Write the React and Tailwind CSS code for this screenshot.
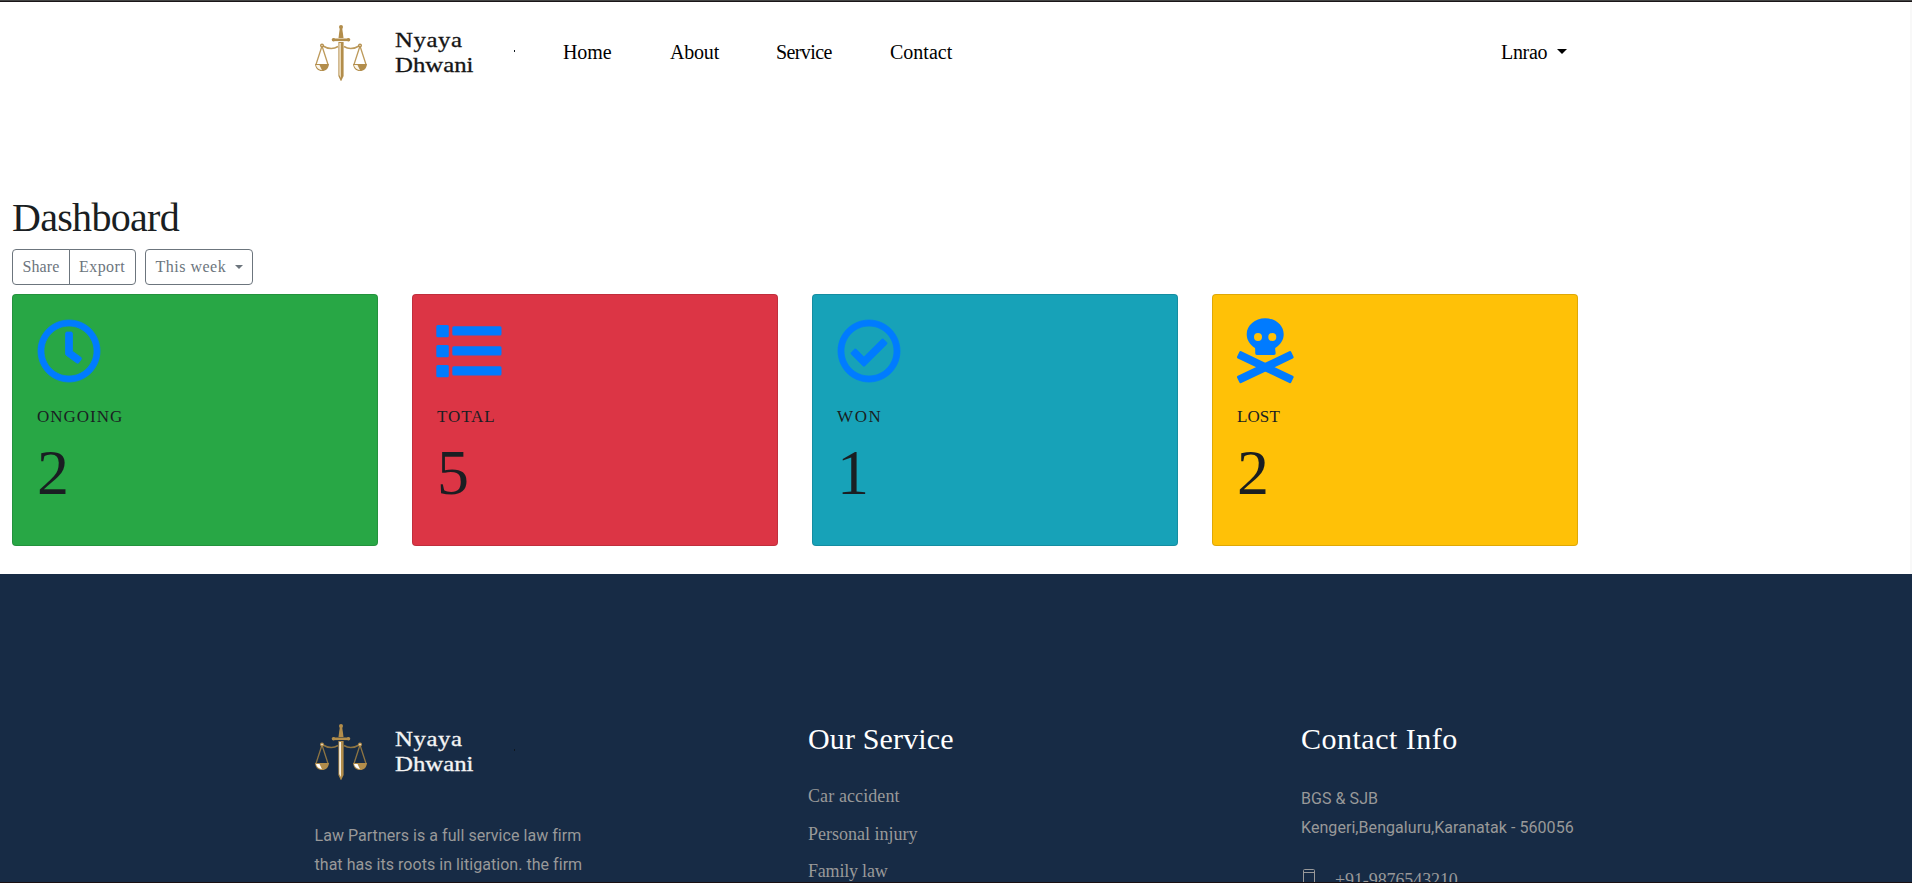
import { FaRegClock, FaRegCheckCircle } from "react-icons/fa";

function Scales({ dark }) {
  const shine = dark ? "#f6efe2" : "#ead9b8";
  const line = dark ? "#8d7442" : "#bd9a5b";
  return (
    <svg width="52" height="56" viewBox="0 0 52 56" fill="none" className="shrink-0">
      <path d="M7 20.5Q16 26 23 21.5M45 20.5Q36 26 29 21.5" stroke={line} strokeWidth="1.5" />
      <path d="M7 21L1 39.5M7 21L13 39.5M45 21L39 39.5M45 21L51 39.5" stroke={line} strokeWidth="1.3" />
      <path d="M0 39H14C13.5 43.5 11 46 7 46S.5 43.5 0 39Z" fill="#b28d4b" />
      <path d="M38 39H52C51.5 43.5 49 46 45 46S38.500 43.5 38 39Z" fill="#b28d4b" />
      <path d="M1 40H4.500L7 45.200Q2 44.500 1 40ZM39 40H42.500L45 45.200Q40 44.500 39 40Z" fill={dark ? "#fff" : "#fbf6ec"} />
      <circle cx="7" cy="20.500" r="2" fill="#b28d4b" />
      <circle cx="45" cy="20.500" r="2" fill="#b28d4b" />
      <circle cx="7" cy="20.500" r=".8" fill={shine} />
      <circle cx="45" cy="20.500" r=".8" fill={shine} />
      <circle cx="26" cy="2" r="2" fill="#b28d4b" />
      <path d="M24.800 3H27.200L28.500 13H23.500Z" fill="#b28d4b" />
      <rect x="18" y="13.500" width="16" height="2.600" fill="#b28d4b" />
      <circle cx="18.500" cy="14.800" r="1.800" fill="#b28d4b" />
      <circle cx="33.500" cy="14.800" r="1.800" fill="#b28d4b" />
      <path d="M23.400 17H28.600V51L26 56.500L23.400 51Z" fill="#b28d4b" />
      <path d="M24.200 18H26V53L24.200 50Z" fill={shine} />
    </svg>
  );
}

function Logo({ dark }) {
  return (
    <div className="flex h-14 w-[200px] items-center">
      <Scales dark={dark} />
      <div
        className={`ml-7 w-[82px] origin-left scale-x-[1.18] text-[21px] leading-[25px] [-webkit-text-stroke:0.3px] ${dark ? "text-[#f4f4f4]" : "text-[#151515]"}`}
      >
        <div className="tracking-[0.5px]">Nyaya</div>
        <div>Dhwani</div>
      </div>
      <span className="mb-[4px] ml-[37px] h-[2px] w-px bg-[#101820]" />
    </div>
  );
}

function ListIcon() {
  return (
    <svg width="66" height="64" viewBox="0 0 66 64" fill="currentColor" className="-ml-px">
      {[6, 26, 46].map((y) => (
        <g key={y}>
          <rect x="0.300" y={y} width="12.500" height="12.200" rx="1.500" />
          <rect x="16.300" y={y + 1.2} width="49.200" height="9.400" rx="1.500" />
        </g>
      ))}
    </svg>
  );
}

function SkullIcon() {
  return (
    <svg width="57" height="64" viewBox="0 0 57 64" fill="currentColor" className="overflow-visible">
      <path
        fillRule="evenodd"
        d="M28.200-.7C18-.7 9.700 6.300 9.700 15.300C9.700 21 12.900 26 18 29L18.200 30.500V34.300Q18.200 36 19.900 36H37Q38.700 36 38.700 34.300L38.200 30.500V29C43.500 26 46.700 21 46.700 15.300C46.700 6.300 38.400-.7 28.200-.7ZM21 14a4 4 0 1 1 0 8a4 4 0 1 1 0-8ZM35.300 14a4 4 0 1 1 0 8a4 4 0 1 1 0-8Z"
      />
      <g transform="translate(28.300 48.200)">
        <rect x="-30" y="-4" width="60" height="8" rx="1.500" transform="rotate(25.500)" />
        <rect x="-30" y="-4" width="60" height="8" rx="1.500" transform="rotate(-25.500)" />
      </g>
    </svg>
  );
}

const cards = [
  {
    label: "ONGOING",
    value: 2,
    bg: "bg-[#28a745]",
    track: "tracking-[1px]",
    icon: <FaRegClock size={64} stroke="currentColor" strokeWidth={6} />,
  },
  { label: "TOTAL", value: 5, bg: "bg-[#dc3545]", track: "tracking-[0.9px]", icon: <ListIcon /> },
  {
    label: "WON",
    value: 1,
    bg: "bg-[#17a2b8]",
    track: "tracking-[1.6px]",
    icon: <FaRegCheckCircle size={64} stroke="currentColor" strokeWidth={6} />,
  },
  { label: "LOST", value: 2, bg: "bg-[#ffc107]", track: "tracking-[0.1px]", icon: <SkullIcon /> },
];

function Caret({ className }) {
  return <span className={`h-0 w-0 border-x-transparent border-b-0 ${className}`} />;
}

export default function App() {
  return (
    <div className="flex h-[883px] w-full flex-col overflow-hidden bg-white font-['Liberation_Serif',serif] text-[#1a1e22]">
      <div className="h-[2px] shrink-0 border-b border-[#1a1618] bg-[#444]" />
      <div className="flex h-[572px] shrink-0 flex-col border-r-2 border-[#f8f8f8]">
        <header className="flex h-[102px] shrink-0 items-center pl-[315px] text-[20px] leading-6 text-black">
          <Logo />
          <nav className="mb-[2px] ml-[48px] flex">
            <a className="w-[107px] tracking-[-0.1px]">Home</a>
            <a className="w-[106px] tracking-[-0.2px]">About</a>
            <a className="w-[114px] tracking-[-0.6px]">Service</a>
            <a className="w-[64px]">Contact</a>
          </nav>
          <div className="mb-[2px] ml-[547px] flex items-center">
            <span className="w-[56px] tracking-[-0.3px]">Lnrao</span>
            <Caret className="mb-px border-x-[5px] border-t-[5px] border-t-black" />
          </div>
        </header>

        <main className="px-3 pt-[90px]">
          <h1 className="text-[40px] leading-[48px] tracking-[-0.7px]">Dashboard</h1>
          <div className="mt-[7px] flex h-9 gap-[9px] text-[16px] leading-[34px] text-[#6c757d]">
            <div className="flex">
              <button className="w-[58px] rounded-l border border-[#6c757d] pl-[9.500px] text-left tracking-[0.1px]">Share</button>
              <button className="-ml-px w-[67px] rounded-r border border-[#6c757d] pl-[9px] text-left tracking-[0.45px]">Export</button>
            </div>
            <button className="flex w-[108px] items-center rounded border border-[#6c757d] pl-[9.500px]">
              <span className="w-[79.500px] text-left tracking-[0.5px]">This week</span>
              <Caret className="mb-px border-x-4 border-t-4 border-t-[#6c757d]" />
            </button>
          </div>
          <div className="mt-[9px] flex gap-[34px]">
            {cards.map((c) => (
              <section key={c.label} className={`h-[252px] w-[366px] rounded border border-black/[0.125] p-6 ${c.bg}`}>
                <div className="h-16 text-[#007bff]">{c.icon}</div>
                <div className={`mt-[22px] text-[17px] leading-6 ${c.track}`}>{c.label}</div>
                <div className="mt-[12px] text-[64px] leading-[64px]">{c.value}</div>
              </section>
            ))}
          </div>
        </main>
      </div>

      <footer className="flex h-[308px] shrink-0 overflow-hidden bg-[#172b45] pl-[314.500px] text-[#999]">
        <div className="w-[493.500px] pt-[150px]">
          <Logo dark />
          <p className="mt-[41px] w-[290px] font-['Roboto',sans-serif] text-[16px] leading-[29px] tracking-[0.04px]">
            Law Partners is a full service law firm
            <br />
            that has its roots in litigation. the firm
          </p>
        </div>
        <div className="w-[493px] pt-[147px]">
          <h2 className="text-[30px] leading-9 tracking-[0.15px] text-white">Our Service</h2>
          <ul className="mt-[21px] text-[18px] leading-[37.500px]">
            <li className="tracking-[0.1px]">Car accident</li>
            <li>Personal injury</li>
            <li className="tracking-[-0.2px]">Family law</li>
          </ul>
        </div>
        <div className="w-[400px] pt-[147px]">
          <h2 className="text-[30px] leading-9 tracking-[0.5px] text-white">Contact Info</h2>
          <p className="mt-[27px] font-['Roboto',sans-serif] text-[16px] leading-[29px] tracking-[0.06px]">
            BGS &amp; SJB
            <br />
            Kengeri,Bengaluru,Karanatak - 560056
          </p>
          <div className="mt-[26px] flex text-[18px] leading-6">
            <svg width="14" height="20" viewBox="0 0 14 20" fill="none" stroke="currentColor" className="ml-[1px] mt-px">
              <rect x="1.500" y=".5" width="11" height="18" rx="1" />
              <path d="M1.500 3.500H12.500" />
            </svg>
            <span className="ml-[19px] tracking-[-0.1px]">+91-9876543210</span>
          </div>
        </div>
      </footer>
      <div className="h-px shrink-0 bg-[#1a1012]" />
    </div>
  );
}
